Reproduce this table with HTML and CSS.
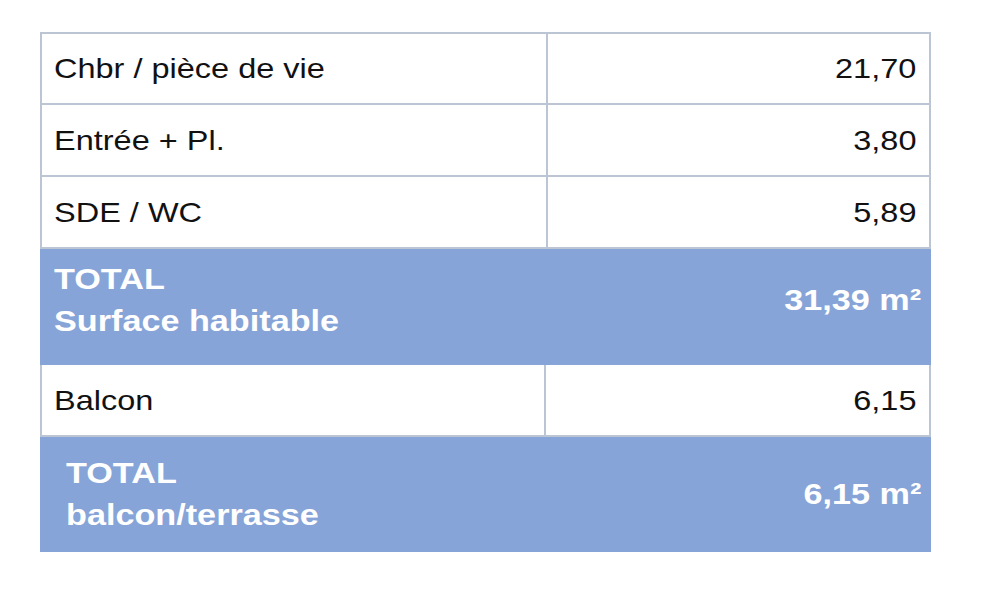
FILE: index.html
```html
<!DOCTYPE html>
<html lang="fr">
<head>
<meta charset="utf-8">
<link rel="stylesheet" href="styles.css">
</head>
<body>
<div class="table">
  <div class="row">
    <div class="cell label"><span class="txt">Chbr / pièce de vie</span></div>
    <div class="cell value"><span class="txt">21,70</span></div>
  </div>
  <div class="row">
    <div class="cell label"><span class="txt">Entrée + Pl.</span></div>
    <div class="cell value"><span class="txt">3,80</span></div>
  </div>
  <div class="row">
    <div class="cell label"><span class="txt">SDE / WC</span></div>
    <div class="cell value"><span class="txt">5,89</span></div>
  </div>
  <div class="total total-1">
    <div class="total-label"><span class="txt">TOTAL<br>Surface habitable</span></div>
    <div class="total-value"><span class="txt">31,39 m²</span></div>
  </div>
  <div class="row row-alt">
    <div class="cell label"><span class="txt">Balcon</span></div>
    <div class="cell value"><span class="txt">6,15</span></div>
  </div>
  <div class="total total-2">
    <div class="total-label"><span class="txt">TOTAL<br>balcon/terrasse</span></div>
    <div class="total-value"><span class="txt">6,15 m²</span></div>
  </div>
</div>
</body>
</html>
```

FILE: styles.css
```css
html, body {
  margin: 0;
  padding: 0;
  background: #ffffff;
}

body {
  font-family: "Liberation Sans", Arial, sans-serif;
  color: #111111;
}

.table {
  margin: 32px 0 0 40px;
  width: 891px;
  box-sizing: border-box;
  border-top: 2px solid #bcc5d3;
  border-left: 2px solid #bcc5d3;
  border-right: 2px solid #bcc5d3;
}

.row {
  display: grid;
  grid-template-columns: 506px 1fr;
  height: 72px;
  box-sizing: border-box;
  border-bottom: 2px solid #bcc5d3;
}

.row:first-child {
  height: 71px;
}

.row-alt {
  grid-template-columns: 504px 1fr;
}

.cell {
  display: flex;
  align-items: center;
  font-size: 28.5px;
}

.txt {
  display: inline-block;
  transform: scaleX(1.14);
  transform-origin: left center;
  white-space: nowrap;
}

.value .txt,
.total-value .txt {
  transform-origin: right center;
}

.label {
  padding-left: 12px;
  border-right: 2px solid #bcc5d3;
}

.value {
  justify-content: flex-end;
  padding-right: 13px;
}

.total {
  display: flex;
  justify-content: space-between;
  align-items: center;
  box-sizing: border-box;
  background: #87a4d8;
  color: #ffffff;
  font-weight: bold;
  font-size: 30px;
  margin: 0 -2px;
}

.total-1 {
  height: 116px;
  padding: 0 10px 14px 14px;
}

.total-2 {
  height: 115px;
  padding: 0 10px 2px 26px;
}

.total-label {
  line-height: 42px;
}

.total-value {
  line-height: 42px;
}
```
